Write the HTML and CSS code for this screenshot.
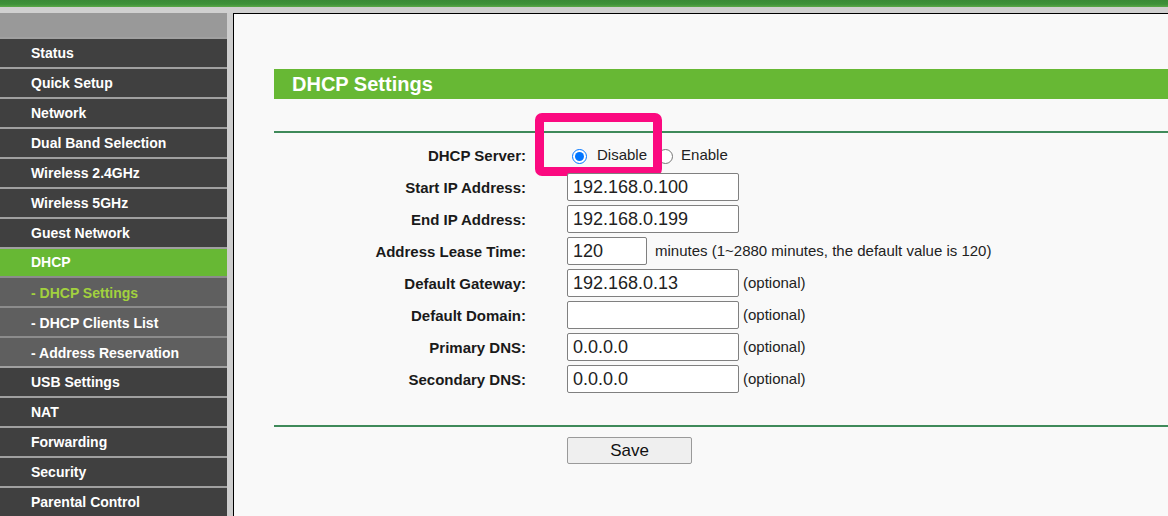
FILE: index.html
```html
<!DOCTYPE html>
<html>
<head>
<meta charset="utf-8">
<title>DHCP Settings</title>
<link rel="stylesheet" href="styles.css">
</head>
<body>
<div class="topbar"></div>
<div class="strip"></div>
<div class="main">
  <nav class="sidebar">
    <div class="side-head"></div>
    <a class="item">Status</a>
    <a class="item">Quick Setup</a>
    <a class="item">Network</a>
    <a class="item">Dual Band Selection</a>
    <a class="item">Wireless 2.4GHz</a>
    <a class="item">Wireless 5GHz</a>
    <a class="item">Guest Network</a>
    <a class="item active">DHCP</a>
    <a class="item sub current">- DHCP Settings</a>
    <a class="item sub">- DHCP Clients List</a>
    <a class="item sub">- Address Reservation</a>
    <a class="item">USB Settings</a>
    <a class="item">NAT</a>
    <a class="item">Forwarding</a>
    <a class="item">Security</a>
    <a class="item">Parental Control</a>
  </nav>
  <main class="content">
    <h1 class="title">DHCP Settings</h1>
    <hr class="rule">
    <form class="form">
      <div class="row">
        <label class="lbl">DHCP Server:</label>
        <div class="field radios">
          <input type="radio" name="srv" class="radio r1" checked><span class="rtext">Disable</span>
          <input type="radio" name="srv" class="radio r2"><span class="rtext">Enable</span>
          <div class="highlight"></div>
        </div>
      </div>
      <div class="row">
        <label class="lbl">Start IP Address:</label>
        <div class="field"><input class="txt" value="192.168.0.100"></div>
      </div>
      <div class="row">
        <label class="lbl">End IP Address:</label>
        <div class="field"><input class="txt" value="192.168.0.199"></div>
      </div>
      <div class="row">
        <label class="lbl">Address Lease Time:</label>
        <div class="field"><input class="txt short" value="120"><span class="note wide">minutes (1~2880 minutes, the default value is 120)</span></div>
      </div>
      <div class="row">
        <label class="lbl">Default Gateway:</label>
        <div class="field"><input class="txt" value="192.168.0.13"><span class="note">(optional)</span></div>
      </div>
      <div class="row">
        <label class="lbl">Default Domain:</label>
        <div class="field"><input class="txt" value=""><span class="note">(optional)</span></div>
      </div>
      <div class="row">
        <label class="lbl">Primary DNS:</label>
        <div class="field"><input class="txt" value="0.0.0.0"><span class="note">(optional)</span></div>
      </div>
      <div class="row">
        <label class="lbl">Secondary DNS:</label>
        <div class="field"><input class="txt" value="0.0.0.0"><span class="note">(optional)</span></div>
      </div>
    </form>
    <hr class="rule rule2">
    <div class="actions"><button type="button" class="btn">Save</button></div>
  </main>
</div>
</body>
</html>
```

FILE: styles.css
```css
html, body {
  margin: 0;
  padding: 0;
}
body {
  background: #f9f9f9;
  font-family: "Liberation Sans", Arial, sans-serif;
  color: #1e1e1e;
  overflow: hidden;
  height: 516px;
}
.topbar {
  height: 7px;
  background: linear-gradient(to bottom, #3a8a36 0%, #3e913a 60%, #5aa848 100%);
}
.strip {
  height: 6px;
  background: #d0d0d0;
}
.main {
  display: flex;
  height: 503px;
}
.sidebar {
  width: 227px;
  flex: none;
  background: #404040;
  border-right: 6px solid #cdcdcd;
  display: flex;
  flex-direction: column;
}
.side-head {
  height: 24px;
  background: #999999;
}
.item {
  display: flex;
  align-items: center;
  height: 28px;
  border-top: 2px solid #a0a0a0;
  background: #404040;
  color: #ffffff;
  font-weight: bold;
  font-size: 14px;
  padding-left: 31px;
  text-decoration: none;
}
.item.active {
  background: #67b834;
}
.item.sub {
  background: #5f5f5f;
  border-top-color: #8c8c8c;
  padding-top: 1px;
  height: 27px;
}
.item.current {
  color: #a2d13e;
}
.content {
  flex: 1;
  border-left: 1px solid #000;
  border-top: 1px solid #000;
  padding-left: 40px;
  position: relative;
}
.title {
  margin: 55px 0 0 0;
  height: 30px;
  line-height: 30px;
  background: #67b834;
  color: #fff;
  font-size: 20px;
  font-weight: bold;
  padding-left: 18px;
}
.rule {
  margin: 32px 0 0 0;
  border: 0;
  height: 2px;
  background: #3f8a5a;
}
.form {
  margin-top: 8px;
  display: flex;
  flex-direction: column;
  gap: 4px;
}
.row {
  display: flex;
  align-items: center;
  height: 28px;
}
.lbl {
  width: 252px;
  flex: none;
  text-align: right;
  font-weight: bold;
  font-size: 15px;
  color: #1a1a1a;
  margin-right: 41px;
}
.field {
  display: flex;
  align-items: center;
  font-size: 15px;
  position: relative;
}
.radios {
  height: 28px;
}
.radio {
  width: 15px;
  height: 15px;
  margin: 3px 0 0 0;
}
.r1 {
  margin-left: 5px;
  margin-right: 10px;
}
.r2 {
  margin-left: 11px;
  margin-right: 8px;
}
.rtext {
  margin-top: -2px;
  color: #222;
}
.highlight {
  position: absolute;
  left: -32px;
  top: -28px;
  width: 109px;
  height: 45px;
  border: 9px solid #fb0a80;
  border-radius: 7px;
  pointer-events: none;
}
.txt {
  box-sizing: border-box;
  width: 172px;
  height: 28px;
  border: 1px solid #808080;
  border-radius: 2px;
  background: #fff;
  font-family: "Liberation Sans", Arial, sans-serif;
  font-size: 18px;
  color: #222;
  padding: 0 5px;
  margin: 0;
}
.txt.short {
  width: 80px;
}
.note {
  margin-left: 4px;
  color: #222;
  margin-top: -2px;
}
.note.wide {
  margin-left: 8px;
}
.rule2 {
  margin-top: 32px;
}
.actions {
  margin-top: 10px;
  padding-left: 293px;
}
.btn {
  box-sizing: border-box;
  width: 125px;
  height: 27px;
  background: #efefef;
  border: 1px solid #9a9a9a;
  border-radius: 2px;
  font-family: "Liberation Sans", Arial, sans-serif;
  font-size: 17px;
  color: #111;
  padding: 0;
}
```
